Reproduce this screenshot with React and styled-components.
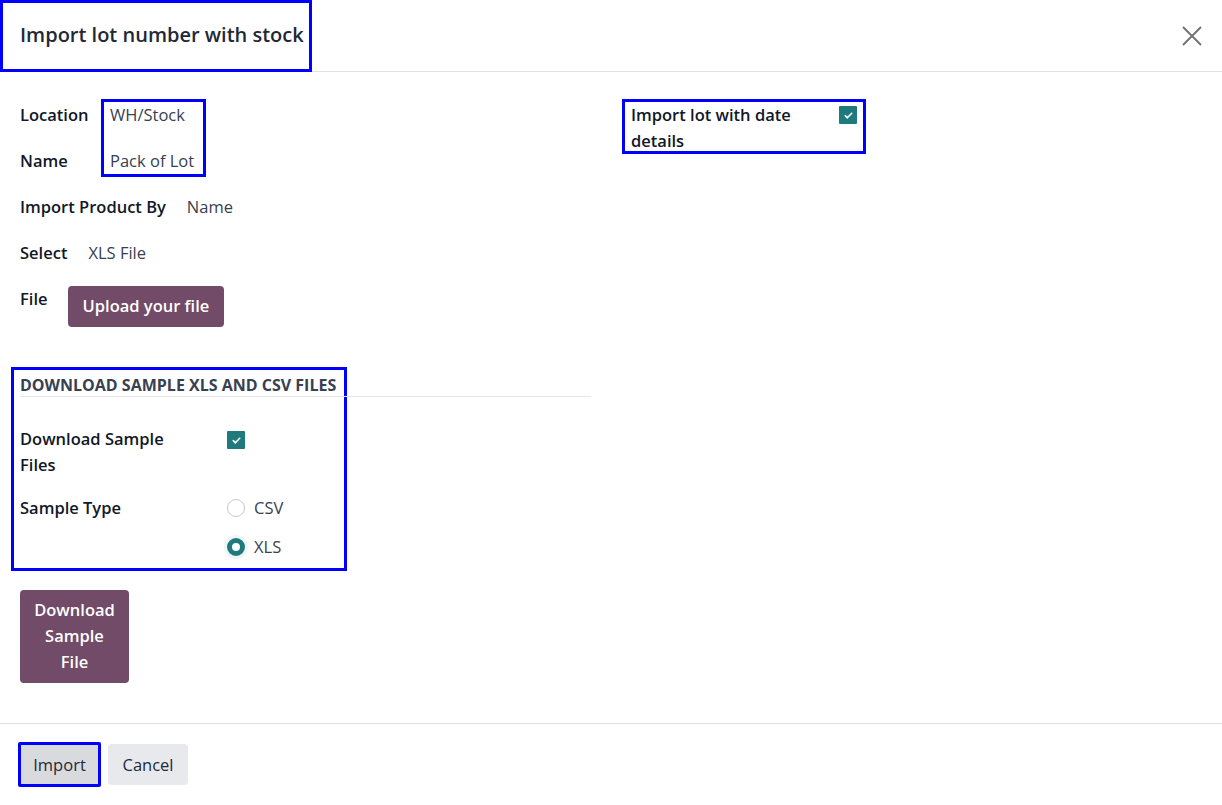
import React from 'react';
import styled, { createGlobalStyle } from 'styled-components';

const GlobalStyle = createGlobalStyle`
  html, body {
    margin: 0;
    padding: 0;
    background: #ffffff;
  }
  body {
    font-family: 'Open Sans', 'Noto Sans', sans-serif;
    color: #111827;
  }
`;

const Dialog = styled.div`
  width: 1222px;
  height: 805px;
  display: flex;
  flex-direction: column;
  background: #fff;
`;

const Header = styled.div`
  height: 72px;
  display: flex;
  align-items: center;
  justify-content: space-between;
  border-bottom: 1px solid #dee2e6;
  box-sizing: border-box;
`;

const Title = styled.h4`
  margin: 0;
  width: 312px;
  height: 72px;
  box-sizing: border-box;
  display: flex;
  align-items: center;
  padding: 0 0 2px 17px;
  font-size: 20px;
  font-weight: 600;
  color: #1f2937;
  border: 3px solid #0000ff;
  white-space: nowrap;
`;

const CloseButton = styled.button`
  border: none;
  background: none;
  padding: 0;
  margin-right: 19px;
  width: 22px;
  height: 22px;
  display: flex;
  align-items: center;
  justify-content: center;
  cursor: pointer;
`;

const Body = styled.div`
  flex: 1;
  padding: 30px 20px 0 20px;
  display: flex;
  flex-direction: column;
`;

const Columns = styled.div`
  display: grid;
  grid-template-columns: 591px 1fr;
  gap: 20px;
`;

const Column = styled.div`
  display: flex;
  flex-direction: column;
`;

const Pair = styled.div`
  display: flex;
  gap: 21px;
`;

const Stack = styled.div`
  display: flex;
  flex-direction: column;
`;

const Label = styled.div`
  font-size: 16.5px;
  font-weight: 600;
  color: #111827;
  line-height: 26px;
  height: ${(p) => (p.$tall ? 'auto' : '46px')};
  width: ${(p) => p.$width || 'auto'};
  flex-shrink: 0;
  white-space: ${(p) => (p.$tall ? 'normal' : 'nowrap')};
`;

const Value = styled.div`
  font-size: 16.5px;
  color: #374151;
  line-height: 26px;
  height: ${(p) => p.$h || '46px'};
  white-space: nowrap;
`;

const ValueBox = styled.div`
  border: 3px solid #0000ff;
  margin: -3px 0 0 -9px;
  padding: 0 5px 0 6px;
  width: 105px;
  height: 78px;
  box-sizing: border-box;
  align-self: flex-start;
`;

const Row = styled.div`
  display: flex;
  gap: ${(p) => p.$gap || '21px'};
  align-items: flex-start;
`;

const PrimaryButton = styled.button`
  border: none;
  border-radius: 4px;
  background: #714b67;
  color: #fff;
  font-family: inherit;
  font-size: 16.5px;
  font-weight: 600;
  line-height: 26px;
  padding: ${(p) => p.$pad || '7px 15px 8px'};
  width: ${(p) => p.$width || 'auto'};
  cursor: pointer;
`;

const WordStack = styled.span`
  display: inline-block;
  width: min-content;
`;

const SectionBox = styled.div`
  width: 336px;
  box-sizing: border-box;
  margin: 35px 0 0 -9px;
  padding: 4px 0 0 6px;
  border: 3px solid #0000ff;
  height: 204px;
`;

const SectionTitle = styled.div`
  font-size: 16px;
  font-weight: 700;
  color: #374151;
  text-transform: uppercase;
  line-height: 22px;
  border-bottom: 1px solid #e5e7eb;
  width: 571px;
  margin-bottom: 29px;
  white-space: nowrap;
`;

const SectionRow = styled.div`
  display: grid;
  grid-template-columns: 207px auto;
  margin-bottom: ${(p) => p.$mb || '0'};
`;

const Checkbox = styled.span`
  display: inline-flex;
  width: 18px;
  height: 18px;
  border-radius: 1px;
  background: #1f7a7e;
  align-items: center;
  justify-content: center;
  margin-top: ${(p) => p.$mt || '0'};
`;

const RadioList = styled.div`
  display: flex;
  flex-direction: column;
  gap: 13px;
`;

const RadioItem = styled.label`
  display: flex;
  align-items: center;
  gap: 9px;
  font-size: 16.5px;
  color: #374151;
  line-height: 26px;
`;

const RadioCircle = styled.span`
  width: 18px;
  height: 18px;
  box-sizing: border-box;
  border-radius: 50%;
  border: ${(p) => (p.$checked ? '5px solid #1f7a7e' : '1px solid #c4c8cc')};
  background: #fff;
  box-shadow: ${(p) => (p.$checked ? '0 0 0 3px #eef6f6' : 'none')};
`;

const DateBox = styled.div`
  display: flex;
  align-self: flex-start;
  margin: -3px 0 0 -9px;
  padding: 0 6px 0 6px;
  height: 55px;
  box-sizing: border-box;
  border: 3px solid #0000ff;
`;

const Footer = styled.div`
  border-top: 1px solid #dee2e6;
  height: 82px;
  box-sizing: border-box;
  display: flex;
  align-items: center;
  gap: 8px;
  padding: 0 20px 0 20px;
`;

const FooterButton = styled.button`
  border: ${(p) => (p.$active ? '3px solid #0000ff' : 'none')};
  margin: ${(p) => (p.$active ? '0 -1px 0 -2px' : '0')};
  border-radius: ${(p) => (p.$active ? '2px' : '4px')};
  background: ${(p) => (p.$active ? '#d8dadd' : '#e7e9ed')};
  color: #1f2937;
  font-family: inherit;
  font-size: 16.5px;
  font-weight: 500;
  height: ${(p) => (p.$active ? '45px' : '41px')};
  width: ${(p) => (p.$active ? '83px' : '80px')};
  cursor: pointer;
`;

const Check = () => (
  <svg width="11" height="11" viewBox="0 0 12 12">
    <path d="M2.5 6.2l2.3 2.3 4.7-4.9" fill="none" stroke="#fff" strokeWidth="1.8" strokeLinecap="round" strokeLinejoin="round" />
  </svg>
);

const App = () => {
  return (
    <Dialog>
      <GlobalStyle />
      <Header>
        <Title>Import lot number with stock</Title>
        <CloseButton aria-label="Close">
          <svg width="20" height="20" viewBox="0 0 20 20">
            <path d="M1 1l18 18M19 1L1 19" stroke="#707070" strokeWidth="1.8" />
          </svg>
        </CloseButton>
      </Header>
      <Body>
        <Columns>
          <Column>
            <Pair>
              <Stack>
                <Label $width="69px">Location</Label>
                <Label $width="69px">Name</Label>
              </Stack>
              <ValueBox>
                <Value>WH/Stock</Value>
                <Value $h="26px">Pack of Lot</Value>
              </ValueBox>
            </Pair>
            <Row>
              <Label>Import Product By</Label>
              <Value>Name</Value>
            </Row>
            <Row>
              <Label>Select</Label>
              <Value>XLS File</Value>
            </Row>
            <Row $gap="20px">
              <Label>File</Label>
              <PrimaryButton>Upload your file</PrimaryButton>
            </Row>
            <SectionBox>
              <SectionTitle>Download Sample XLS and CSV Files</SectionTitle>
              <SectionRow $mb="17px">
                <Label $tall $width="160px">Download Sample Files</Label>
                <Checkbox $mt="5px">
                  <Check />
                </Checkbox>
              </SectionRow>
              <SectionRow>
                <Label $tall>Sample Type</Label>
                <RadioList>
                  <RadioItem>
                    <RadioCircle />
                    CSV
                  </RadioItem>
                  <RadioItem>
                    <RadioCircle $checked />
                    XLS
                  </RadioItem>
                </RadioList>
              </SectionRow>
            </SectionBox>
            <Row style={{ marginTop: '19px' }}>
              <PrimaryButton $width="109px" $pad="7px 4px 8px">
                <WordStack>Download Sample File</WordStack>
              </PrimaryButton>
            </Row>
          </Column>
          <Column>
            <DateBox>
              <Label $tall $width="208px">Import lot with date details</Label>
              <Checkbox $mt="4px">
                <Check />
              </Checkbox>
            </DateBox>
          </Column>
        </Columns>
      </Body>
      <Footer>
        <FooterButton $active>Import</FooterButton>
        <FooterButton>Cancel</FooterButton>
      </Footer>
    </Dialog>
  );
};

export default App;
